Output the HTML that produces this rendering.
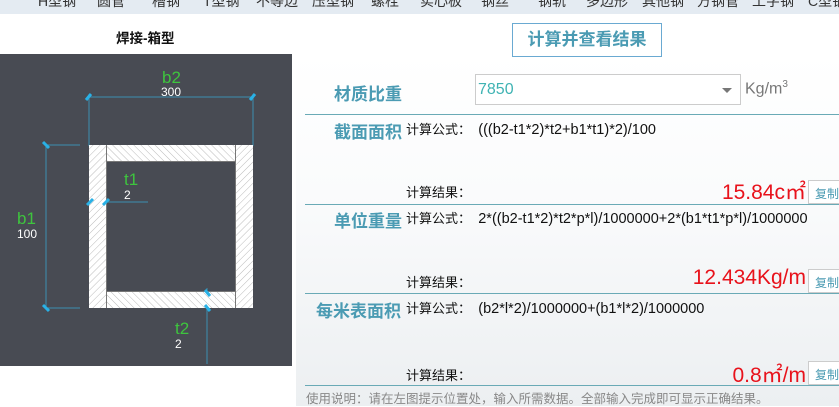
<!DOCTYPE html>
<html><head><meta charset="utf-8"><style>
*{margin:0;padding:0;box-sizing:border-box}
body{width:839px;height:406px;overflow:hidden;position:relative;background:#fff;font-family:"Liberation Sans","Microsoft YaHei","Noto Sans CJK SC",sans-serif}
.a{position:absolute;white-space:nowrap}
.nav{left:0;top:0;width:839px;height:14px;background:#e4ebf2;overflow:hidden}
.nav span{position:absolute;top:-9px;font-size:14px;color:#333}
.right{left:296px;top:54px;width:543px;height:352px;background:linear-gradient(#fff,#fafbfc 40%,#eceff1)}
.ln{position:absolute;left:305px;width:534px;height:1px;background:#6aaab6}
.lab{font-size:17px;font-weight:bold;color:#4b9bb3}
.f{font-size:13px;color:#111}
.fm{font-size:14.5px}
.res{font-size:21px;color:#e8121b;text-align:right}
.cp{position:absolute;left:808px;width:32px;height:24px;background:#fff;border:1px solid #ccc;font-size:12px;color:#4b9bb3;padding:4px 0 0 6px}
</style></head><body>
<div class="a nav">
<span style="left:38px">H型钢</span><span style="left:97px">圆管</span><span style="left:152px">槽钢</span><span style="left:203px">T型钢</span><span style="left:256px">不等边</span><span style="left:312px">压型钢</span><span style="left:371px">螺栓</span><span style="left:420px">实心板</span><span style="left:481px">钢丝</span><span style="left:538px">钢轨</span><span style="left:586px">多边形</span><span style="left:642px">其他钢</span><span style="left:697px">方钢管</span><span style="left:752px">工字钢</span><span style="left:808px">C型钢</span>
</div>
<div class="a" style="left:116px;top:27px;font-size:13.5px;font-weight:bold;color:#111">焊接-箱型</div>
<div class="a right"></div>
<div class="a" style="left:512px;top:23px;width:150px;height:34px;border:1px solid #6aaad2;background:#fff;font-size:17px;font-weight:bold;color:#4b9bb3;text-align:center;line-height:32px;z-index:2">计算并查看结果</div>
<svg class="a" style="left:0;top:54px" width="292" height="312">
<defs><pattern id="h" width="5" height="5" patternUnits="userSpaceOnUse" patternTransform="rotate(45)"><rect width="5" height="5" fill="#fff"/><line x1="0" y1="0" x2="0" y2="5" stroke="#bbb" stroke-width="1"/></pattern>
<pattern id="h2" width="5" height="5" patternUnits="userSpaceOnUse" patternTransform="rotate(-45)"><rect width="5" height="5" fill="#fff"/><line x1="0" y1="0" x2="0" y2="5" stroke="#bbb" stroke-width="1"/></pattern></defs>
<rect width="292" height="312" fill="#484b53"/>
<g stroke="#3d8fb0" stroke-width="1" fill="none">
<line x1="89" y1="43" x2="253" y2="43"/><line x1="89" y1="40" x2="89" y2="92"/><line x1="253" y1="40" x2="253" y2="92"/>
<line x1="46" y1="91" x2="46" y2="254"/><line x1="46" y1="91" x2="80" y2="91"/><line x1="46" y1="254" x2="80" y2="254"/>
<line x1="89" y1="148" x2="148" y2="148"/><line x1="207" y1="234" x2="207" y2="310"/>
</g>
<rect x="89" y="91" width="17" height="163" fill="url(#h)"/>
<rect x="236" y="91" width="17" height="163" fill="url(#h)"/>
<rect x="106" y="91" width="130" height="16" fill="url(#h2)"/>
<rect x="106" y="238" width="130" height="16" fill="url(#h2)"/>
<g stroke="#777" stroke-width="1"><line x1="106.5" y1="91" x2="106.5" y2="254"/><line x1="235.5" y1="91" x2="235.5" y2="254"/><line x1="106" y1="107.5" x2="236" y2="107.5"/><line x1="106" y1="237.5" x2="236" y2="237.5"/></g>
<g stroke="#29b1e6" stroke-width="3">
<line x1="86" y1="46" x2="91" y2="40"/><line x1="250" y1="46" x2="255" y2="40"/>
<line x1="43" y1="88" x2="49" y2="94"/><line x1="43" y1="251" x2="49" y2="257"/>
<line x1="87" y1="151" x2="93" y2="145"/><line x1="103" y1="151" x2="109" y2="145"/>
<line x1="205" y1="236" x2="210" y2="242"/><line x1="205" y1="251" x2="210" y2="257"/>
</g>
<g font-family="Liberation Sans,sans-serif">
<text x="162" y="29" fill="#3ec43e" font-size="17">b2</text><text x="161" y="42" fill="#fff" font-size="12">300</text>
<text x="17" y="170" fill="#3ec43e" font-size="17">b1</text><text x="17" y="184" fill="#fff" font-size="12">100</text>
<text x="124" y="131" fill="#3ec43e" font-size="17">t1</text><text x="124" y="145" fill="#fff" font-size="12">2</text>
<text x="175" y="280" fill="#3ec43e" font-size="17">t2</text><text x="175" y="294" fill="#fff" font-size="12">2</text>
</g>
</svg>
<div class="a lab" style="left:334px;top:80px">材质比重</div>
<div class="a" style="left:475px;top:74px;width:266px;height:31px;border:1px solid #ccc;background:#fff;font-size:16px;color:#3fb3b3;padding:6px 0 0 2px">7850<span style="position:absolute;right:8px;top:13px;border:5px solid transparent;border-top:5px solid #777;border-bottom:0"></span></div>
<div class="a" style="left:745px;top:79px;font-size:16px;color:#777">Kg/m<sup style="font-size:10px">3</sup></div>
<div class="ln" style="top:114px"></div>
<div class="ln" style="top:204px"></div>
<div class="ln" style="top:293px"></div>
<div class="ln" style="top:385px"></div>
<div class="a lab" style="left:334px;top:118px">截面面积</div>
<div class="a f" style="left:406px;top:119px">计算公式：&nbsp;&nbsp;<span class="fm">(((b2-t1*2)*t2+b1*t1)*2)/100</span></div>
<div class="a f" style="left:406px;top:182px">计算结果：</div>
<div class="a res" style="right:33px;top:176px">15.84c㎡</div>
<div class="cp" style="top:180px">复制</div>
<div class="a lab" style="left:334px;top:207px">单位重量</div>
<div class="a f" style="left:406px;top:208px">计算公式：&nbsp;&nbsp;<span class="fm">2*((b2-t1*2)*t2*p*l)/1000000+2*(b1*t1*p*l)/1000000</span></div>
<div class="a f" style="left:406px;top:272px">计算结果：</div>
<div class="a res" style="right:33px;top:266px">12.434Kg/m</div>
<div class="cp" style="top:269px">复制</div>
<div class="a lab" style="left:316px;top:297px">每米表面积</div>
<div class="a f" style="left:406px;top:298px">计算公式：&nbsp;&nbsp;<span class="fm">(b2*l*2)/1000000+(b1*l*2)/1000000</span></div>
<div class="a f" style="left:406px;top:365px">计算结果：</div>
<div class="a res" style="right:33px;top:359px">0.8㎡/m</div>
<div class="cp" style="top:361px">复制</div>
<div class="a" style="left:306px;top:388px;font-size:12.5px;color:#888">使用说明：请在左图提示位置处，输入所需数据。全部输入完成即可显示正确结果。</div>
</body></html>
